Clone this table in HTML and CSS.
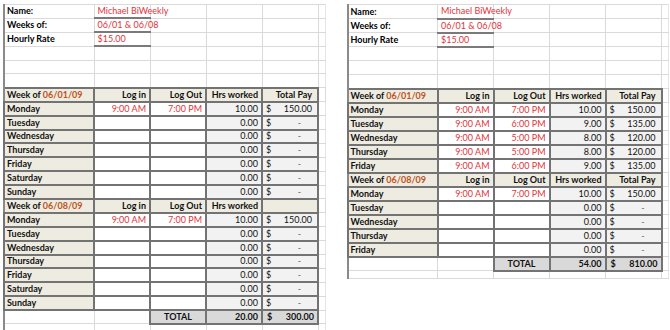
FILE: index.html
```html
<!DOCTYPE html>
<html lang="en">
<head>
    <meta charset="UTF-8">
    <title>Timesheet</title>
    <link rel="stylesheet" href="styles.css">
</head>
<body>
<div class="page">

    <!-- Lembar kiri: dua minggu penuh -->
    <table class="sheet sheet-left">
        <colgroup>
            <col class="c-day"><col class="c-time"><col class="c-time"><col class="c-num"><col class="c-num"><col class="c-pad">
        </colgroup>
        <tr><td class="lbl">Name:</td><td class="inp">Michael BiWeekly</td><td class="spill"></td><td></td><td></td><td></td></tr>
        <tr><td class="lbl">Weeks of:</td><td class="inp">06/01 &amp; 06/08</td><td></td><td></td><td></td><td></td></tr>
        <tr><td class="lbl">Hourly Rate</td><td class="inp">$15.00</td><td></td><td></td><td></td><td></td></tr>
        <tr><td></td><td></td><td></td><td></td><td></td><td></td></tr>
        <tr><td></td><td></td><td></td><td></td><td></td><td></td></tr>
        <tr><td></td><td></td><td></td><td></td><td></td><td></td></tr>

        <tr class="hd"><td class="wk">Week of <span class="date">06/01/09</span></td><td class="r">Log in</td><td class="r">Log Out</td><td class="r">Hrs worked</td><td class="r pr">Total Pay</td><td class="free"></td></tr>
        <tr><td class="day">Monday</td><td class="tm">9:00 AM</td><td class="tm">7:00 PM</td><td class="hr">10.00</td><td class="pay"><div class="money"><span>$</span><span>150.00</span></div></td><td></td></tr>
        <tr><td class="day">Tuesday</td><td class="tm"></td><td class="tm"></td><td class="hr">0.00</td><td class="pay"><div class="money"><span>$</span><span class="dash">-</span></div></td><td></td></tr>
        <tr><td class="day">Wednesday</td><td class="tm"></td><td class="tm"></td><td class="hr">0.00</td><td class="pay"><div class="money"><span>$</span><span class="dash">-</span></div></td><td></td></tr>
        <tr><td class="day">Thursday</td><td class="tm"></td><td class="tm"></td><td class="hr">0.00</td><td class="pay"><div class="money"><span>$</span><span class="dash">-</span></div></td><td></td></tr>
        <tr><td class="day">Friday</td><td class="tm"></td><td class="tm"></td><td class="hr">0.00</td><td class="pay"><div class="money"><span>$</span><span class="dash">-</span></div></td><td></td></tr>
        <tr><td class="day">Saturday</td><td class="tm"></td><td class="tm"></td><td class="hr">0.00</td><td class="pay"><div class="money"><span>$</span><span class="dash">-</span></div></td><td></td></tr>
        <tr><td class="day">Sunday</td><td class="tm"></td><td class="tm"></td><td class="hr">0.00</td><td class="pay"><div class="money"><span>$</span><span class="dash">-</span></div></td><td></td></tr>

        <tr class="hd"><td class="wk">Week of <span class="date">06/08/09</span></td><td class="r">Log in</td><td class="r">Log Out</td><td class="r">Hrs worked</td><td></td><td class="free"></td></tr>
        <tr><td class="day">Monday</td><td class="tm">9:00 AM</td><td class="tm">7:00 PM</td><td class="hr">10.00</td><td class="pay"><div class="money"><span>$</span><span>150.00</span></div></td><td></td></tr>
        <tr><td class="day">Tuesday</td><td class="tm"></td><td class="tm"></td><td class="hr">0.00</td><td class="pay"><div class="money"><span>$</span><span class="dash">-</span></div></td><td></td></tr>
        <tr><td class="day">Wednesday</td><td class="tm"></td><td class="tm"></td><td class="hr">0.00</td><td class="pay"><div class="money"><span>$</span><span class="dash">-</span></div></td><td></td></tr>
        <tr><td class="day">Thursday</td><td class="tm"></td><td class="tm"></td><td class="hr">0.00</td><td class="pay"><div class="money"><span>$</span><span class="dash">-</span></div></td><td></td></tr>
        <tr><td class="day">Friday</td><td class="tm"></td><td class="tm"></td><td class="hr">0.00</td><td class="pay"><div class="money"><span>$</span><span class="dash">-</span></div></td><td></td></tr>
        <tr><td class="day">Saturday</td><td class="tm"></td><td class="tm"></td><td class="hr">0.00</td><td class="pay"><div class="money"><span>$</span><span class="dash">-</span></div></td><td></td></tr>
        <tr><td class="day">Sunday</td><td class="tm"></td><td class="tm"></td><td class="hr">0.00</td><td class="pay"><div class="money"><span>$</span><span class="dash">-</span></div></td><td></td></tr>

        <tr class="total"><td class="edge"></td><td></td><td class="tot c">TOTAL</td><td class="tot r">20.00</td><td class="tot"><div class="money"><span>$</span><span>300.00</span></div></td><td></td></tr>
        <tr class="tail"><td class="edge"></td><td></td><td></td><td></td><td></td><td></td></tr>
    </table>

    <!-- Lembar kanan: hari kerja saja -->
    <table class="sheet sheet-right">
        <colgroup>
            <col class="c-day"><col class="c-time"><col class="c-time"><col class="c-num"><col class="c-num"><col class="c-pad">
        </colgroup>
        <tr><td class="lbl">Name:</td><td class="inp">Michael BiWeekly</td><td class="spill"></td><td></td><td></td><td></td></tr>
        <tr><td class="lbl">Weeks of:</td><td class="inp">06/01 &amp; 06/08</td><td></td><td></td><td></td><td></td></tr>
        <tr><td class="lbl">Hourly Rate</td><td class="inp">$15.00</td><td></td><td></td><td></td><td></td></tr>
        <tr><td></td><td></td><td></td><td></td><td></td><td></td></tr>
        <tr><td></td><td></td><td></td><td></td><td></td><td></td></tr>
        <tr><td></td><td></td><td></td><td></td><td></td><td></td></tr>

        <tr class="hd"><td class="wk">Week of <span class="date">06/01/09</span></td><td class="r">Log in</td><td class="r">Log Out</td><td class="r">Hrs worked</td><td class="r pr">Total Pay</td><td class="free"></td></tr>
        <tr><td class="day">Monday</td><td class="tm">9:00 AM</td><td class="tm">7:00 PM</td><td class="hr">10.00</td><td class="pay"><div class="money"><span>$</span><span>150.00</span></div></td><td></td></tr>
        <tr><td class="day">Tuesday</td><td class="tm">9:00 AM</td><td class="tm">6:00 PM</td><td class="hr">9.00</td><td class="pay"><div class="money"><span>$</span><span>135.00</span></div></td><td></td></tr>
        <tr><td class="day">Wednesday</td><td class="tm">9:00 AM</td><td class="tm">5:00 PM</td><td class="hr">8.00</td><td class="pay"><div class="money"><span>$</span><span>120.00</span></div></td><td></td></tr>
        <tr><td class="day">Thursday</td><td class="tm">9:00 AM</td><td class="tm">5:00 PM</td><td class="hr">8.00</td><td class="pay"><div class="money"><span>$</span><span>120.00</span></div></td><td></td></tr>
        <tr><td class="day">Friday</td><td class="tm">9:00 AM</td><td class="tm">6:00 PM</td><td class="hr">9.00</td><td class="pay"><div class="money"><span>$</span><span>135.00</span></div></td><td></td></tr>

        <tr class="hd"><td class="wk">Week of <span class="date">06/08/09</span></td><td class="r">Log in</td><td class="r">Log Out</td><td class="r">Hrs worked</td><td class="r pr">Total Pay</td><td class="free"></td></tr>
        <tr><td class="day">Monday</td><td class="tm">9:00 AM</td><td class="tm">7:00 PM</td><td class="hr">10.00</td><td class="pay"><div class="money"><span>$</span><span>150.00</span></div></td><td></td></tr>
        <tr><td class="day">Tuesday</td><td class="tm"></td><td class="tm"></td><td class="hr">0.00</td><td class="pay"><div class="money"><span>$</span><span class="dash">-</span></div></td><td></td></tr>
        <tr><td class="day">Wednesday</td><td class="tm"></td><td class="tm"></td><td class="hr">0.00</td><td class="pay"><div class="money"><span>$</span><span class="dash">-</span></div></td><td></td></tr>
        <tr><td class="day">Thursday</td><td class="tm"></td><td class="tm"></td><td class="hr">0.00</td><td class="pay"><div class="money"><span>$</span><span class="dash">-</span></div></td><td></td></tr>
        <tr><td class="day">Friday</td><td class="tm"></td><td class="tm"></td><td class="hr">0.00</td><td class="pay"><div class="money"><span>$</span><span class="dash">-</span></div></td><td></td></tr>

        <tr class="total"><td class="edge"></td><td></td><td class="tot c">TOTAL</td><td class="tot r">54.00</td><td class="tot"><div class="money"><span>$</span><span>810.00</span></div></td><td></td></tr>
        <tr class="tail"><td class="edge"></td><td></td><td></td><td></td><td></td><td></td></tr>
    </table>

</div>
</body>
</html>
```

FILE: styles.css
```css
* {
    margin: 0;
    padding: 0;
    box-sizing: border-box;
}
body {
    background: #fff;
    font-family: 'Lato', 'Liberation Sans', sans-serif;
    font-size: 9px;
    color: #111;
}

.page {
    display: flex;
    align-items: flex-start;
    padding: 4px 0 0 3px;
    gap: 21px;
}

/* Lembar */
.sheet {
    border-collapse: collapse;
    table-layout: fixed;
    width: 321px;
}
.sheet-right {
    border-top: 1px solid #b9d3b4;
}
.c-day { width: 90px; }
.c-time { width: 56px; }
.c-num { width: 56px; }
.c-pad { width: 7px; }

.sheet tr { height: 14px; }
.sheet-left tr { height: 13.9px; }
.sheet tr.tail { height: 8px; }

.sheet td {
    border: 1px solid #dadada;
    padding: 0 3px 0 3px;
    line-height: 10px;
    white-space: nowrap;
    overflow: visible;
    vertical-align: middle;
}
.sheet td:first-child {
    border-left: 2px solid #8a8a8a;
    padding-left: 2px;
}
.sheet td:last-child {
    border-right-color: #e6e6e6;
}
.sheet td.spill {
    border-left-color: transparent;
}

/* Info atas */
.lbl { font-weight: bold; color: #000; }
.inp {
    color: #e0343b;
    border-bottom: 2px solid #7a7a7a !important;
}

/* Header minggu */
.hd td {
    background: #eeece1;
    font-weight: bold;
    color: #111;
    border: 2px solid #737373;
}
.hd td.free {
    background: #fff;
    border: 1px solid #dadada;
    border-left: 2px solid #737373;
}
.date { color: #c0511c; }
.r { text-align: right; }
.c { text-align: center; }
.pr { padding-right: 5px !important; }

/* Baris hari */
.day {
    background: #eeece1;
    font-weight: bold;
    color: #111;
    border: 2px solid #737373 !important;
}
.tm {
    text-align: right;
    color: #e0343b;
    border: 2px solid #737373 !important;
}
.hr {
    text-align: right;
    background: #f2f2f2;
    border: 2px solid #737373 !important;
}
.pay {
    background: #f2f2f2;
    border: 2px solid #737373 !important;
    padding-right: 5px !important;
}
.money {
    display: flex;
    justify-content: space-between;
}
.money .dash {
    padding-right: 11px;
    color: #666;
}

/* Total */
.tot {
    background: #d9d9d9;
    font-weight: bold;
    border: 2px solid #737373 !important;
}
.tot .money { padding-left: 1px; }
```
